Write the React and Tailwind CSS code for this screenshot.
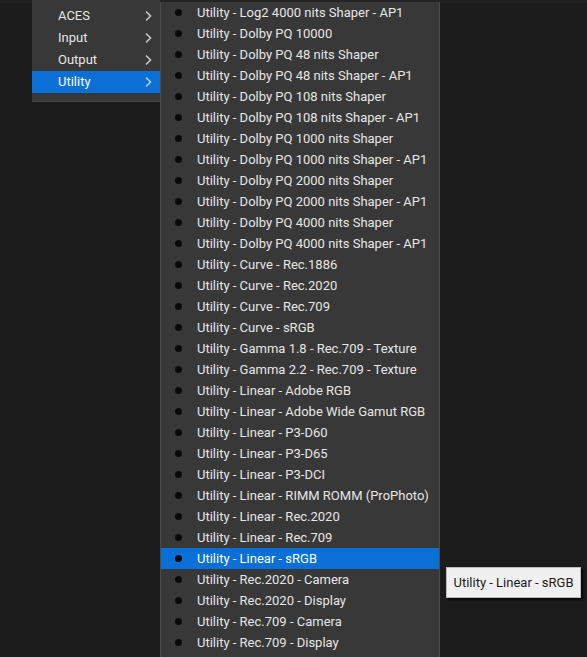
import React from "react";

const items = [
  "Utility - Log2 4000 nits Shaper - AP1",
  "Utility - Dolby PQ 10000",
  "Utility - Dolby PQ 48 nits Shaper",
  "Utility - Dolby PQ 48 nits Shaper - AP1",
  "Utility - Dolby PQ 108 nits Shaper",
  "Utility - Dolby PQ 108 nits Shaper - AP1",
  "Utility - Dolby PQ 1000 nits Shaper",
  "Utility - Dolby PQ 1000 nits Shaper - AP1",
  "Utility - Dolby PQ 2000 nits Shaper",
  "Utility - Dolby PQ 2000 nits Shaper - AP1",
  "Utility - Dolby PQ 4000 nits Shaper",
  "Utility - Dolby PQ 4000 nits Shaper - AP1",
  "Utility - Curve - Rec.1886",
  "Utility - Curve - Rec.2020",
  "Utility - Curve - Rec.709",
  "Utility - Curve - sRGB",
  "Utility - Gamma 1.8 - Rec.709 - Texture",
  "Utility - Gamma 2.2 - Rec.709 - Texture",
  "Utility - Linear - Adobe RGB",
  "Utility - Linear - Adobe Wide Gamut RGB",
  "Utility - Linear - P3-D60",
  "Utility - Linear - P3-D65",
  "Utility - Linear - P3-DCI",
  "Utility - Linear - RIMM ROMM (ProPhoto)",
  "Utility - Linear - Rec.2020",
  "Utility - Linear - Rec.709",
  "Utility - Linear - sRGB",
  "Utility - Rec.2020 - Camera",
  "Utility - Rec.2020 - Display",
  "Utility - Rec.709 - Camera",
  "Utility - Rec.709 - Display",
];

const Chevron = () => (
  <svg width="8" height="12" viewBox="0 0 8 12" fill="none" stroke="#c8c8c8" strokeWidth="1.6">
    <path d="M2 1.5 L6.5 6 L2 10.5" />
  </svg>
);

export default function App() {
  return (
    <div
      className="relative h-[657px] w-[587px] overflow-hidden bg-[#1c1c1c] text-[13px] text-[#e6e6e6]"
      style={{ fontFamily: "Roboto, 'Liberation Sans', sans-serif" }}
    >
      <div className="h-[3px] bg-[#242424]" />
      <div className="flex items-start">
        <div className="ml-[32px] mt-[-3px] w-[128px] bg-[#383838] pt-[5px] pb-[8px] border-b border-[#4a4a4a]">
          {["ACES", "Input", "Output", "Utility"].map((m) => (
            <div
              key={m}
              className={`flex h-[22px] items-center justify-between pl-[26px] pr-[8px] ${
                m === "Utility" ? "bg-[#0a6fd6] text-white" : ""
              }`}
            >
              <span>{m}</span>
              <Chevron />
            </div>
          ))}
        </div>
        <div className="mt-[-1px] h-[660px] w-[280px] bg-[#383838] border-x border-[#4a4a4a]">
          {items.map((t) => (
            <div
              key={t}
              className={`flex h-[21px] items-center ${
                t === "Utility - Linear - sRGB" ? "bg-[#0a6fd6] text-white" : ""
              }`}
            >
              <span className="ml-[14px] mr-[15px] h-[7px] w-[7px] rounded-full bg-[#0a0a0a]" />
              <span>{t}</span>
            </div>
          ))}
        </div>
      </div>
      <div className="absolute left-[446px] top-[567px] flex h-[31px] w-[135px] items-center justify-center bg-[#f0f0f0] text-[#1a1a1a] shadow-[2px_2px_2px_rgba(0,0,0,0.8)] border border-[#bdbdbd]">
        Utility - Linear - sRGB
      </div>
    </div>
  );
}
